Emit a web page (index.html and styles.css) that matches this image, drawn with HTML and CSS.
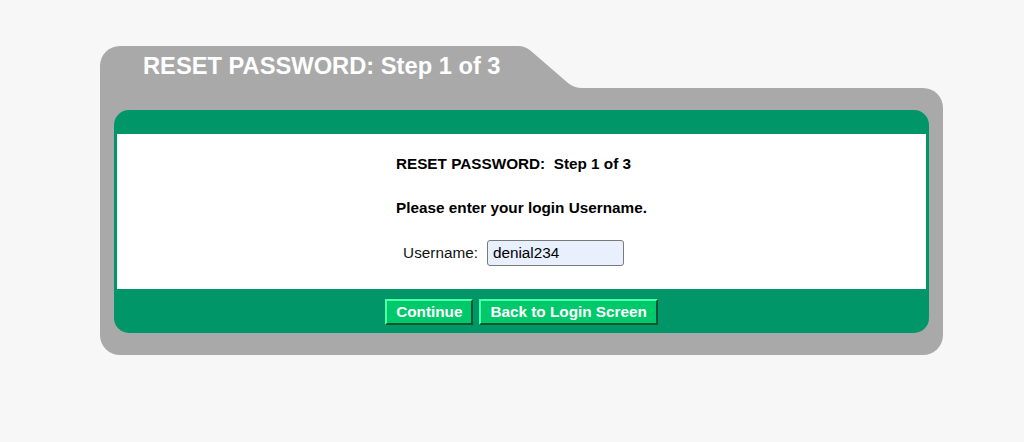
FILE: index.html
```html
<!DOCTYPE html>
<html>
<head>
<meta charset="utf-8">
<title>Reset Password</title>
<link rel="stylesheet" href="styles.css">
</head>
<body>
<div class="page">
  <div class="frame">
    <div class="tab"><span class="tab-title">RESET PASSWORD: Step 1 of 3</span></div>
    <div class="frame-body">
      <div class="panel">
        <div class="panel-content">
          <div class="heading">RESET PASSWORD:&nbsp; Step 1 of 3</div>
          <div class="prompt">Please enter your login Username.</div>
          <div class="field-row">
            <label class="field-label" for="username">Username:</label>
            <input class="field-input" id="username" type="text" value="denial234">
          </div>
        </div>
        <div class="panel-footer">
          <button class="btn" type="button">Continue</button>
          <button class="btn" type="button">Back to Login Screen</button>
        </div>
      </div>
    </div>
  </div>
</div>
</body>
</html>
```
FILE: styles.css
```css
html, body {
  margin: 0;
  padding: 0;
}
body {
  background: #f7f7f7;
  font-family: "Liberation Sans", Arial, sans-serif;
  color: #000;
}
.page {
  padding: 46px 0 0 100px;
}
.frame {
  width: 843px;
}
.tab {
  width: 482px;
  height: 42px;
  background: #a9a9a9;
  border-top-left-radius: 20px;
  clip-path: path("M0 0 H418 Q425 0 431 5 L468 37 Q474 42 482 42 H0 Z");
  box-sizing: border-box;
  padding: 7px 0 0 43px;
}
.tab-title {
  color: #fff;
  font-weight: bold;
  font-size: 23.7px;
  line-height: 27px;
  white-space: nowrap;
}
.frame-body {
  background: #a9a9a9;
  border-radius: 0 20px 20px 20px;
  padding: 22px 14px;
}
.panel {
  background: #009668;
  border-radius: 15px;
  padding: 24px 3px 0 3px;
}
.panel-content {
  background: #fff;
  height: 155px;
  box-sizing: border-box;
  padding-top: 21px;
  text-align: center;
  font-size: 15.3px;
  line-height: 18px;
}
.heading {
  font-weight: bold;
  padding-right: 16px;
}
.prompt {
  font-weight: bold;
  margin-top: 26px;
}
.field-row {
  margin-top: 23px;
  display: flex;
  justify-content: center;
  align-items: center;
  gap: 9px;
  padding-right: 16px;
}
.field-label {
  font-size: 15.3px;
  color: #111;
}
.field-input {
  width: 137px;
  height: 26px;
  box-sizing: border-box;
  background: #e8f0fe;
  border: 1px solid #7a7a7a;
  border-radius: 3px;
  padding: 0 5px;
  font-family: "Liberation Sans", Arial, sans-serif;
  font-size: 15.3px;
  color: #000;
}
.panel-footer {
  height: 44px;
  box-sizing: border-box;
  padding-top: 10px;
  display: flex;
  justify-content: center;
  align-items: flex-start;
  gap: 6px;
}
.btn {
  height: 26px;
  box-sizing: border-box;
  margin: 0;
  padding: 0 9px;
  background: #00c96b;
  color: #fff;
  font-family: "Liberation Sans", Arial, sans-serif;
  font-weight: bold;
  font-size: 15.3px;
  line-height: 22px;
  border-width: 2px;
  border-style: solid;
  border-color: #4dffa6 #00542f #00542f #4dffa6;
}
```
